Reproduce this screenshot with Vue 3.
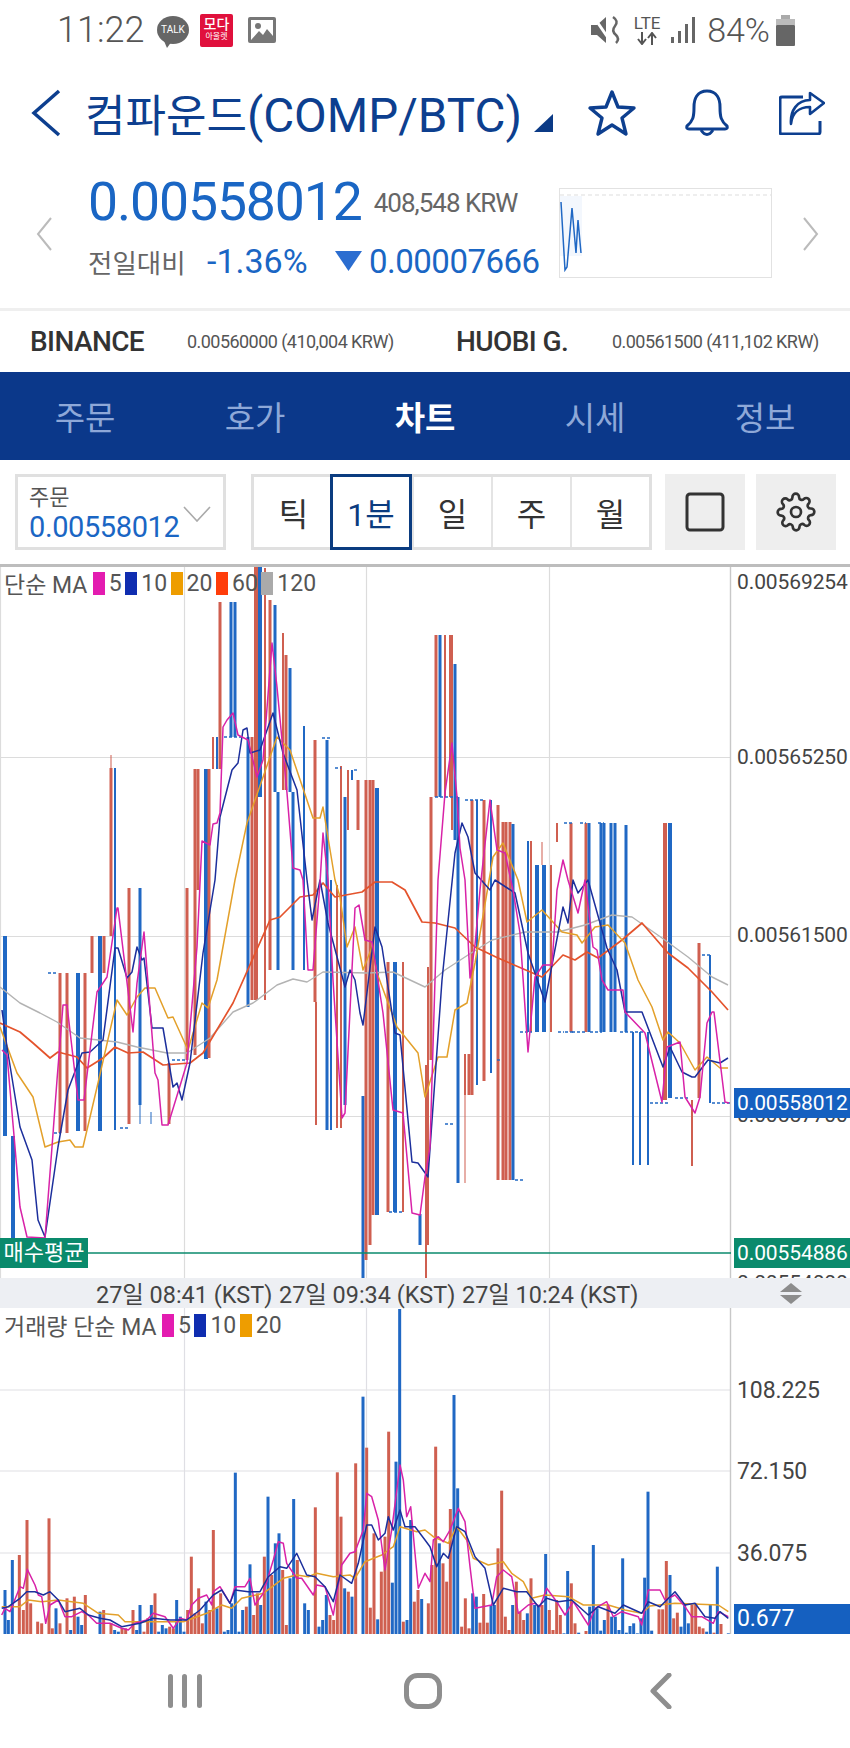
<script setup>
const tabs = ['주문', '호가', '차트', '시세', '정보']
const ranges = ['틱', '1분', '일', '주', '월']

// candles in page coordinates: x, top, bottom, colour, width
const candles = [
  [5,936,1136,'b',4],[13,1136,1238,'b',4],[60,973,1133,'r',3],[67,973,1133,'r',3],[78,973,1131,'b',4],[85,973,1131,'r',3],
  [92,936,973,'r',3],[100,936,1131,'b',4],[104,936,973,'r',3],[111,755,768,'r',1],[111,768,936,'r',3],[115,768,1130,'b',2],
  [129,888,1124,'r',3],[140,888,1105,'b',3],[140,1105,1124,'b',1],[151,1112,1124,'b',1],[169,1063,1124,'r',3],
  [187,888,1060,'r',3],[195,769,1055,'r',3],[198,769,890,'r',3],[206,769,1059,'b',4],[209,769,1058,'r',3],
  [213,737,769,'r',2],[217,737,769,'b',2],[220,602,769,'r',3],[231,602,737,'b',3],[235,602,737,'b',3],
  [248,737,1007,'b',3],[252,737,1000,'r',3],[256,564,1000,'r',4],[260,564,797,'b',4],[265,568,1000,'r',2],[270,600,970,'r',3],
  [275,605,792,'b',3],[283,633,790,'r',2],[286,655,790,'r',3],[290,668,792,'b',3],[278,792,970,'b',3],[293,792,970,'b',3],
  [304,726,970,'b',2],[315,740,1002,'r',3],[316,1002,1125,'r',2],[327,740,1130,'b',3],[331,880,1130,'b',2],[337,885,1128,'r',2],
  [341,766,1128,'r',2],[345,797,1105,'b',3],[348,770,830,'r',2],[352,770,780,'b',2],[358,780,830,'r',3],
  [363,1096,1278,'b',3],[366,780,1260,'r',3],[370,780,1245,'r',3],[373,780,1215,'r',3],[377,788,1215,'b',4],
  [388,962,1212,'r',3],[395,962,1212,'b',4],[403,962,1212,'r',2],[420,1214,1245,'b',3],
  [426,1065,1278,'r',2],[428,967,1245,'r',2],[431,797,1060,'r',3],[436,635,797,'r',3],[440,635,797,'b',3],[445,635,797,'r',2],
  [450,635,797,'r',2],[452,635,830,'r',2],[455,664,840,'b',3],[458,797,1183,'b',3],[465,1054,1183,'r',1],
  [465,1054,1095,'r',2],[469,1054,1095,'r',3],[472,800,1095,'r',3],[477,800,1085,'b',2],[484,800,1081,'r',3],[491,800,1073,'b',2],
  [498,805,1180,'r',3],[503,822,1180,'r',3],[506,822,1180,'r',3],[510,822,1180,'r',3],[513,824,1180,'b',3],
  [528,841,1032,'b',2],[531,841,1032,'r',2],[537,865,1032,'b',4],[544,865,1032,'b',4],[542,842,865,'r',1],[551,865,1032,'r',2],
  [557,823,842,'r',2],[571,823,1032,'r',3],[586,823,1032,'r',3],[589,823,1032,'b',3],[601,823,1032,'b',3],[604,823,1032,'b',3],
  [611,823,1032,'b',3],[615,823,1032,'b',3],[626,825,1032,'b',3],[633,1032,1165,'b',2],[640,1032,1165,'b',2],[648,1032,1165,'b',2],
  [665,823,1100,'r',4],[670,823,1098,'b',4],[692,1100,1166,'r',2],[699,943,1098,'r',3],[710,955,1103,'b',2]
]

// short flat candles, drawn as dashes: x, y, length
const dashes = [
  [48,973,10],[54,1133,6],[120,1128,8],[445,1124,10],[172,1060,14],[224,737,20],[322,738,8],[335,768,6],[354,770,4],
  [389,1212,14],[435,797,25],[465,800,20],[515,1180,10],[520,1032,12],[558,1032,6],[565,1032,8],[572,1032,14],[590,1032,12],
  [620,1032,24],[650,1103,20],[675,1098,14],[702,955,8],[712,1103,18],[564,823,8],[580,823,6],[598,823,6],[497,1060,4]
]

const ma5 = '2,1050 7,1055 15,1147 20,1207 27,1237 45,1238 52,1147 57,1080 63,1005 67,1005 78,1100 84,1100 97,992 107,977 117,908 118,908 133,1032 137,983 144,932 155,1073 158,1080 162,1125 168,1125 187,1063 197,947 202,841 210,845 213,824 217,823 220,813 223,727 227,720 233,713 238,735 248,740 257,777 263,760 272,643 277,687 287,793 293,868 300,870 303,880 308,970 313,970 320,883 323,833 328,880 333,980 342,1118 345,1113 355,908 359,905 365,940 372,942 383,1013 393,1110 403,1113 412,1213 420,1215 425,1177 430,1147 438,880 445,793 452,743 457,797 460,848 465,880 470,978 475,945 480,890 484,853 490,800 497,850 505,853 513,890 520,933 528,1052 535,977 543,965 552,965 557,890 563,860 568,880 578,913 585,880 593,947 597,950 602,980 608,990 623,990 625,1012 645,1033 662,1102 667,1047 680,1042 685,1097 695,1113 700,1097 707,1023 712,1012 714,1012 725,1102 729,1103'
const ma10 = '2,1010 7,1047 20,1127 32,1160 38,1220 45,1237 58,1147 68,1090 82,1053 90,1052 103,1040 115,948 118,948 127,978 132,972 137,947 142,960 144,958 152,1028 163,1028 173,1087 177,1083 182,1100 190,1063 203,953 215,880 220,817 232,770 238,763 243,730 247,728 250,753 260,750 273,713 283,753 297,790 307,880 312,920 320,880 328,923 345,987 350,970 355,980 360,1013 363,1025 375,927 382,947 395,1033 400,1035 412,1162 418,1163 428,1177 442,980 455,853 462,823 468,837 475,873 490,890 495,880 515,893 528,953 545,1002 563,907 568,923 573,880 578,893 588,880 607,948 617,970 625,1012 642,1012 663,1067 670,1047 682,1072 692,1077 695,1077 708,1060 720,1063 728,1058'
const ma20 = '0,1027 17,1073 33,1097 45,1147 58,1142 70,1140 75,1147 83,1147 98,1083 117,1000 127,1015 137,997 145,988 155,988 168,1018 173,1017 188,1050 202,1003 208,1008 217,980 235,880 247,823 277,737 290,750 313,818 320,818 323,807 335,880 340,897 347,947 355,927 363,970 372,947 377,973 397,1027 418,1053 425,1097 438,1057 447,1057 455,1010 467,1003 475,963 493,857 503,843 518,880 527,922 542,910 562,932 577,935 582,943 595,927 608,925 625,943 638,980 652,1007 663,1040 668,1032 680,1043 695,1070 707,1057 720,1068 728,1068'
const ma60 = '0,1023 20,1032 33,1043 50,1058 58,1052 77,1057 87,1068 103,1058 115,1047 128,1053 143,1052 163,1065 190,1063 203,1053 233,1003 270,920 280,917 300,897 313,895 323,883 335,897 362,892 375,882 392,882 405,890 422,922 435,923 455,928 475,947 498,958 542,977 563,955 575,960 587,952 598,958 622,940 642,923 668,953 688,968 712,992 728,1010'
const ma120 = '0,987 20,1003 40,1013 57,1022 80,1038 117,1042 137,1047 167,1053 187,1053 210,1038 233,1012 253,1003 277,985 293,979 307,982 323,972 367,973 393,972 425,987 445,970 468,955 492,940 525,932 558,932 585,925 612,915 632,917 662,938 688,957 712,977 728,985'

const priceLines = [
  { points: ma120, color: '#b3b3b3', width: 1.4 },
  { points: ma60, color: '#e4532c', width: 1.7 },
  { points: ma20, color: '#e3a02a', width: 1.5 },
  { points: ma10, color: '#1c2f9c', width: 1.5 },
  { points: ma5, color: '#d822a8', width: 1.5 }
]

// volume bars read off the left and right half of the chart: colour, x, top
const volLeft = 'b15:870 b25:960 b37:780 r58:765 r70:930 r81:660 r92:910 r113:965 r125:970 r147:655 r157:985 b168:925 r180:970 r201:895 b212:990 r223:890 b234:950 b245:975 r256:885 b300:935 r311:930 r333:970 b344:990 b355:995 r366:985 r377:985 r399:930 b410:990 b420:915 r432:995 r443:955 b454:915 r465:880 b476:995 b487:975 b498:985 r509:980 r520:985 b530:900 b541:950 b552:995 r563:930 r574:770 r585:940 r596:865 r607:970 b618:905 r629:930 r640:690 b651:925 r662:880 b673:995 b684:990 b695:910 b706:518 b717:995 b728:930 r739:920 b750:793 r761:945 r772:880 b782:915 r793:770 b804:590 r815:825 b826:730 b837:700 r848:810 r859:975 b870:835 b881:597 r892:780 b914:910 b925:930 r946:622 b957:980 b968:960 b979:885 r990:945 r1001:960 r1012:517 r1023:650 b1034:865 r1045:875 b1056:890 r1067:490 b1089:290 r1100:443 r1111:923 r1122:700 b1133:958 r1144:815 r1155:710 r1166:395 b1177:848 b1188:485 b1199:27 r1210:965 b1221:960 b1232:660 r1243:905 r1254:870 b1265:897'
const volRight = 'r10:910 r21:795 r32:440 b43:730 r54:790 r65:845 r76:627 b87:285 b98:565 r110:980 r121:895 r132:985 b143:880 b154:890 r165:968 r176:882 r187:968 b198:915 b208:915 r219:745 r230:572 r241:950 r252:990 b263:915 r274:845 r285:935 r296:960 b307:940 r318:835 b329:915 b340:915 r351:915 b362:762 r373:930 r384:990 r395:900 r406:945 b417:1000 b428:813 r439:850 r450:970 b461:998 r483:993 b494:920 b505:735 b516:925 b527:992 b538:960 r549:915 b560:950 b571:950 b582:990 b593:775 b604:998 b615:978 b626:970 b637:1000 b648:955 b659:833 b669:575 b680:992 r702:928 r713:928 r724:783 b735:825 r746:955 r757:938 b768:980 b779:910 b790:970 r801:915 r812:910 r823:980 r834:985 b845:995 b856:915 r867:998 b877:800 r888:972 b910:1000'

function parseVol(str, offset) {
  return str.split(' ').map((s) => {
    const [x, y] = s.slice(1).split(':').map(Number)
    return { x: offset + x / 3, top: 1300 + y / 3, color: s[0] }
  })
}
const volBars = [...parseVol(volLeft, 0), ...parseVol(volRight, 425)]

function zoomPts(left, right) {
  const conv = (str, offset) => str.split(' ').map((p) => {
    const [x, y] = p.split(',').map(Number)
    return (offset + x / 3).toFixed(1) + ',' + (1300 + y / 3).toFixed(1)
  })
  return [...conv(left, 0), ...conv(right, 425)].join(' ')
}

const volLines = [
  { color: '#e3a02a', points: zoomPts('5,920 30,920 60,920 85,900 125,905 175,900 250,910 295,940 355,945 375,965 460,965 550,965 620,940 665,915 695,925 725,895 790,880 850,835 890,825 925,830 950,820 1000,830 1050,825 1065,835 1095,785 1145,765 1180,740 1200,680 1250,695 1275,690', '25,710 70,730 95,680 125,720 145,775 190,795 235,785 260,820 295,845 320,895 360,885 430,890 475,915 550,915 600,930 650,940 675,918 750,910 880,915 910,935') },
  { color: '#d822a8', points: zoomPts('5,945 15,925 30,935 60,860 70,865 82,808 105,855 115,885 125,890 137,970 150,915 175,900 195,950 215,950 245,935 265,945 290,970 330,970 365,985 385,990 405,970 440,960 460,940 495,950 520,985 540,955 560,960 575,915 595,895 620,885 635,915 640,875 660,860 690,910 705,860 735,860 750,835 765,915 790,880 820,780 835,725 850,730 860,790 890,835 905,835 940,885 950,855 975,860 1000,945 1025,795 1050,760 1065,755 1090,690 1100,580 1115,590 1135,660 1155,810 1175,690 1200,495 1210,540 1220,650 1232,620 1245,760 1255,865 1275,820', '15,845 25,720 40,710 55,725 75,690 100,625 120,665 135,800 150,925 200,915 215,830 235,810 260,830 280,940 310,915 330,910 345,920 365,865 395,905 420,945 445,905 490,975 510,925 545,905 565,950 590,935 640,950 650,975 670,870 705,870 720,900 750,885 780,920 800,950 830,950 865,970 880,935 910,950') },
  { color: '#1c2f9c', points: zoomPts('5,925 25,920 60,895 80,875 105,875 130,885 150,875 175,900 195,935 240,925 265,945 300,955 330,960 365,980 420,970 460,955 510,960 560,960 600,930 640,885 665,870 690,910 705,870 745,875 780,875 805,830 840,800 860,805 890,760 920,825 945,830 975,860 1000,905 1020,825 1055,850 1075,790 1100,675 1115,675 1135,720 1155,700 1165,650 1180,690 1200,630 1215,680 1245,680 1275,720', '15,740 35,800 55,760 70,775 95,680 120,695 150,770 180,805 205,915 235,865 275,875 305,875 340,920 365,895 400,905 440,900 490,945 520,920 570,940 595,915 650,940 670,905 705,920 750,875 780,915 810,910 840,950 870,955 885,935 910,955') }
]

const barColor = { r: '#cf5f50', b: '#2068c4' }
</script>

<template>
  <div class="page">
    <div class="status">
      <span class="clock">11:22</span>
      <span class="talk">TALK</span>
      <span class="moda"><b>모다</b><i>아울렛</i></span>
      <svg class="pic" width="28" height="26" viewBox="0 0 28 26">
        <rect width="28" height="26" rx="2" fill="#777" />
        <rect x="3" y="3" width="22" height="20" fill="#fff" />
        <circle cx="10" cy="9" r="3" fill="#777" />
        <path d="M3 23 L11 14 L15 18 L19 12 L25 19 V23 Z" fill="#777" />
      </svg>
      <svg class="mute" width="32" height="30" viewBox="0 0 32 30">
        <path d="M0 10 H6 L15 2 V28 L6 20 H0 Z" fill="#666" />
        <path d="M2 1 L20 27" stroke="#fff" stroke-width="3" />
        <path d="M22 2 Q28 6 24 11 Q20 16 25 20 Q29 24 25 28" fill="none" stroke="#666" stroke-width="2.5" />
      </svg>
      <div class="lte">
        <span>LTE</span>
        <svg width="20" height="13" viewBox="0 0 20 13">
          <path d="M5 0 V10 M1 7 L5 12 L9 7 M15 13 V3 M11 6 L15 1 L19 6" fill="none" stroke="#555" stroke-width="2" />
        </svg>
      </div>
      <svg class="signal" width="24" height="26" viewBox="0 0 24 26">
        <rect x="0" y="20" width="3" height="6" fill="#666" />
        <rect x="7" y="14" width="3" height="12" fill="#666" />
        <rect x="14" y="7" width="3" height="19" fill="#666" />
        <rect x="21" y="0" width="3" height="26" fill="#666" />
      </svg>
      <span class="battery-text">84%</span>
      <svg width="19" height="31" viewBox="0 0 19 31">
        <rect x="5" y="0" width="9" height="4" fill="#aaa" />
        <rect x="0" y="4" width="19" height="6" fill="#bbb" />
        <rect x="0" y="10" width="19" height="21" rx="1" fill="#666" />
      </svg>
    </div>

    <header class="title-bar">
      <svg width="30" height="48" viewBox="0 0 30 48">
        <path d="M28 2 L3 24 L28 46" fill="none" stroke="#0d3f8f" stroke-width="3.5" />
      </svg>
      <h1><span class="coin">컴파운드</span>(COMP/BTC)</h1>
      <svg class="caret" width="19" height="18" viewBox="0 0 19 18"><path d="M19 0 V18 H0 Z" fill="#0b3a86" /></svg>
      <svg class="star" width="50" height="48" viewBox="0 0 50 48">
        <path d="M25 3 L31 18 L47 19 L35 29 L39 45 L25 36 L11 45 L15 29 L3 19 L19 18 Z" fill="none" stroke="#0d3f8f" stroke-width="3.4" stroke-linejoin="round" />
      </svg>
      <svg class="bell" width="44" height="48" viewBox="0 0 44 48">
        <path d="M22 2 C12 2 9 10 9 18 C9 28 8 32 2 37 Q1 40 4 40 H40 Q43 40 42 37 C36 32 35 28 35 18 C35 10 32 2 22 2 Z" fill="none" stroke="#0d3f8f" stroke-width="3" />
        <path d="M16 41 Q22 50 28 41" fill="none" stroke="#0d3f8f" stroke-width="3" />
      </svg>
      <svg class="share" width="46" height="44" viewBox="0 0 46 44">
        <path d="M24 6 H3 Q1 6 1 8 V41 Q1 43 3 43 H39 Q41 43 41 41 V30" fill="none" stroke="#0d3f8f" stroke-width="3" />
        <path d="M12 33 C13 22 20 16 31 16 V23 L45 12 L31 2 V9 C18 9 11 20 12 33 Z" fill="#fff" stroke="#0d3f8f" stroke-width="2.6" stroke-linejoin="round" />
      </svg>
    </header>

    <section class="price-panel">
      <svg class="arrow" width="16" height="34" viewBox="0 0 16 34"><path d="M15 1 L2 17 L15 33" fill="none" stroke="#bbb" stroke-width="2" /></svg>
      <div class="price-info">
        <div class="price-row">
          <span class="price">0.00558012</span>
          <span class="krw">408,548 KRW</span>
        </div>
        <div class="change-row">
          <span class="change-label">전일대비</span>
          <span class="change-pct">-1.36%</span>
          <svg width="27" height="20" viewBox="0 0 27 20"><path d="M0 0 H27 L13.5 20 Z" fill="#2b6dd0" /></svg>
          <span class="change-val">0.00007666</span>
        </div>
      </div>
      <svg class="mini" width="213" height="90" viewBox="559 188 213 90">
        <rect x="559.5" y="188.5" width="212" height="89" fill="#fff" stroke="#e2e2e2" />
        <line x1="560" y1="195" x2="771" y2="195" stroke="#ddd" stroke-dasharray="4 3" />
        <rect x="560" y="196" width="22" height="60" fill="#f3f7fd" />
        <polyline points="561,202 565,270 567,267 572,208 576,253 578,220 581,253" fill="none" stroke="#2068c4" stroke-width="1.5" />
      </svg>
      <svg class="arrow" width="16" height="34" viewBox="0 0 16 34"><path d="M1 1 L14 17 L1 33" fill="none" stroke="#bbb" stroke-width="2" /></svg>
    </section>

    <section class="exchanges">
      <strong>BINANCE</strong>
      <span>0.00560000 (410,004 KRW)</span>
      <strong>HUOBI G.</strong>
      <span>0.00561500 (411,102 KRW)</span>
    </section>

    <nav class="tabs">
      <span v-for="tab in tabs" :key="tab" :class="{ active: tab === '차트' }">{{ tab }}</span>
    </nav>

    <section class="controls">
      <div class="order-select">
        <div>
          <div class="order-label">주문</div>
          <div class="order-value">0.00558012</div>
        </div>
        <svg width="28" height="16" viewBox="0 0 28 16"><path d="M1 1 L14 15 L27 1" fill="none" stroke="#aaa" stroke-width="1.6" /></svg>
      </div>
      <div class="ranges">
        <span v-for="r in ranges" :key="r" :class="{ active: r === '1분' }">{{ r }}</span>
      </div>
      <div class="icon-btn">
        <svg width="40" height="40" viewBox="0 0 40 40"><rect x="2" y="2" width="36" height="36" rx="3" fill="none" stroke="#333" stroke-width="3" /></svg>
      </div>
      <div class="icon-btn">
        <svg width="40" height="40" viewBox="0 0 24 24" fill="none" stroke="#333" stroke-width="1.6" stroke-linejoin="round">
          <circle cx="12" cy="12" r="3" />
          <path d="M19.4 15a1.65 1.65 0 0 0 .33 1.82l.06.06a2 2 0 1 1-2.83 2.83l-.06-.06a1.65 1.65 0 0 0-2.82 1.17V21a2 2 0 1 1-4 0v-.09a1.65 1.65 0 0 0-2.82-1.12l-.06.06a2 2 0 1 1-2.83-2.83l.06-.06a1.65 1.65 0 0 0-1.17-2.82H3a2 2 0 1 1 0-4h.09A1.65 1.65 0 0 0 4.2 7.32l-.06-.06a2 2 0 1 1 2.83-2.83l.06.06a1.65 1.65 0 0 0 2.82-1.17V3a2 2 0 1 1 4 0v.09a1.65 1.65 0 0 0 2.82 1.17l.06-.06a2 2 0 1 1 2.83 2.83l-.06.06a1.65 1.65 0 0 0 1.17 2.82H21a2 2 0 1 1 0 4h-.09a1.65 1.65 0 0 0-1.51 1z" />
        </svg>
      </div>
    </section>

    <section class="price-chart">
      <svg class="plot" width="850" height="714" viewBox="0 564 850 714">
        <g stroke="#dcdcdc" stroke-width="1.2">
          <line x1="184.5" y1="564" x2="184.5" y2="1278" />
          <line x1="366.5" y1="564" x2="366.5" y2="1278" />
          <line x1="549.5" y1="564" x2="549.5" y2="1278" />
          <line x1="0" y1="757.5" x2="731" y2="757.5" />
          <line x1="0" y1="936.5" x2="731" y2="936.5" />
          <line x1="0" y1="1116.5" x2="731" y2="1116.5" />
          <line x1="0.5" y1="564" x2="0.5" y2="1278" />
        </g>
        <line x1="730.5" y1="564" x2="730.5" y2="1278" stroke="#c8c8c8" stroke-width="1.4" />
        <rect v-for="(c, i) in candles" :key="i" :x="c[0] - c[4] / 2" :y="c[1]" :width="c[4]" :height="c[2] - c[1]" :fill="barColor[c[3]]" />
        <line v-for="(d, i) in dashes" :key="'d' + i" :x1="d[0]" :y1="d[1]" :x2="d[0] + d[2]" :y2="d[1]" stroke="#2068c4" stroke-width="1.4" stroke-dasharray="3 2" />
        <line x1="0" y1="1253" x2="731" y2="1253" stroke="#0a8a6c" stroke-width="1.6" />
        <polyline v-for="l in priceLines" :key="l.color" :points="l.points" fill="none" :stroke="l.color" :stroke-width="l.width" stroke-linejoin="round" />
      </svg>

      <div class="legend">
        <span class="legend-name">단순 MA</span>
        <i class="swatch magenta"></i><span>5</span>
        <i class="swatch navy"></i><span>10</span>
        <i class="swatch orange"></i><span>20</span>
        <i class="swatch red"></i><span>60</span>
        <i class="swatch grey"></i><span>120</span>
      </div>

      <span class="axis" style="top: 5px">0.00569254</span>
      <span class="axis" style="top: 180px">0.00565250</span>
      <span class="axis" style="top: 358px">0.00561500</span>
      <span class="axis" style="top: 538px">0.00557700</span>
      <span class="axis" style="top: 706px">0.00554000</span>
      <span class="tag blue">0.00558012</span>
      <span class="tag green">0.00554886</span>
      <span class="avg-label">매수평균</span>
    </section>

    <div class="time-bar">
      <div class="times">
        <span>27일 08:41 (KST)</span>
        <span>27일 09:34 (KST)</span>
        <span>27일 10:24 (KST)</span>
      </div>
      <svg width="26" height="21" viewBox="0 0 26 21">
        <path d="M13 0 L24 9 H2 Z" fill="#8c8c8c" />
        <path d="M2 12 H24 L13 21 Z" fill="#8c8c8c" />
      </svg>
    </div>

    <section class="volume-chart">
      <svg class="plot" width="850" height="326" viewBox="0 1308 850 326">
        <g stroke="#dfdfe4" stroke-width="1.2">
          <line x1="184.5" y1="1308" x2="184.5" y2="1634" />
          <line x1="366.5" y1="1308" x2="366.5" y2="1634" />
          <line x1="549.5" y1="1308" x2="549.5" y2="1634" />
          <line x1="0" y1="1390" x2="731" y2="1390" />
          <line x1="0" y1="1471" x2="731" y2="1471" />
          <line x1="0" y1="1553" x2="731" y2="1553" />
        </g>
        <line x1="730.5" y1="1308" x2="730.5" y2="1634" stroke="#c8c8c8" stroke-width="1.4" />
        <rect v-for="(b, i) in volBars" :key="i" :x="b.x - 1.5" :y="b.top" width="3" :height="1634 - b.top" :fill="barColor[b.color]" />
        <polyline v-for="l in volLines" :key="l.color" :points="l.points" fill="none" :stroke="l.color" stroke-width="1.5" stroke-linejoin="round" />
      </svg>
      <div class="legend vol">
        <span class="legend-name">거래량 단순 MA</span>
        <i class="swatch magenta"></i><span>5</span>
        <i class="swatch navy"></i><span>10</span>
        <i class="swatch orange"></i><span>20</span>
      </div>
      <span class="axis vol-axis" style="top: 70px">108.225</span>
      <span class="axis vol-axis" style="top: 151px">72.150</span>
      <span class="axis vol-axis" style="top: 233px">36.075</span>
      <span class="tag vol-tag">0.677</span>
    </section>

    <footer class="soft-keys">
      <svg width="34" height="36" viewBox="0 0 34 36">
        <rect x="0" y="1" width="5" height="34" rx="2.5" fill="#8e8e8e" />
        <rect x="14" y="1" width="5" height="34" rx="2.5" fill="#8e8e8e" />
        <rect x="29" y="1" width="5" height="34" rx="2.5" fill="#8e8e8e" />
      </svg>
      <svg width="38" height="36" viewBox="0 0 38 36"><rect x="2.5" y="2.5" width="33" height="31" rx="11" fill="none" stroke="#8e8e8e" stroke-width="5" /></svg>
      <svg width="22" height="36" viewBox="0 0 22 36"><path d="M19 2 L3 18 L19 34" fill="none" stroke="#8e8e8e" stroke-width="5" stroke-linecap="round" stroke-linejoin="round" /></svg>
    </footer>
  </div>
</template>

<style scoped>
.page {
  width: 850px;
  height: 1748px;
  overflow: hidden;
  background: #fff;
  font-family: Roboto, "Noto Sans CJK KR", sans-serif;
  color: #444;
}

.status {
  height: 60px;
  display: flex;
  align-items: center;
  padding: 0 55px 0 57px;
  box-sizing: border-box;
}
.clock {
  font-size: 36px;
  font-weight: 300;
  color: #555;
  width: 100px;
}
.talk {
  position: relative;
  width: 32px;
  height: 28px;
  border-radius: 50%;
  background: #666;
  color: #fff;
  font-size: 10px;
  text-align: center;
  line-height: 28px;
}
.talk::after {
  content: "";
  position: absolute;
  left: 7px;
  bottom: -4px;
  border-left: 3px solid transparent;
  border-right: 5px solid transparent;
  border-top: 7px solid #666;
}
.moda {
  width: 33px;
  height: 33px;
  margin-left: 11px;
  border-radius: 2px;
  background: #e0103c;
  color: #fff;
  display: flex;
  flex-direction: column;
  align-items: center;
  line-height: 1;
}
.moda b {
  font-size: 14px;
  font-weight: 500;
  margin-top: 3px;
}
.moda i {
  font-size: 8px;
  font-style: normal;
  margin-top: 2px;
}
.pic {
  margin-left: 15px;
}
.mute {
  margin-left: auto;
}
.lte {
  width: 28px;
  margin-left: 10px;
  display: flex;
  flex-direction: column;
  align-items: center;
  gap: 1px;
  font-size: 17px;
  line-height: 15px;
  color: #555;
}
.signal {
  margin-left: 10px;
}
.battery-text {
  margin-left: 12px;
  margin-right: 6px;
  font-size: 34px;
  font-weight: 300;
  color: #555;
}

.title-bar {
  height: 106px;
  display: flex;
  align-items: center;
  padding-left: 31px;
}
.title-bar h1 {
  margin: 0 0 0 24px;
  font-size: 47.5px;
  font-weight: 400;
  color: #0d3f8f;
  white-space: nowrap;
}
.coin {
  font-size: 44px;
}
.caret {
  margin: 20px 0 0 12px;
}
.star {
  margin-left: 34px;
}
.bell {
  margin-left: 48px;
}
.share {
  margin-left: 50px;
}

.price-panel {
  height: 145px;
  box-sizing: border-box;
  display: flex;
  align-items: flex-start;
  padding-left: 36px;
  border-bottom: 3px solid #efefef;
}
.arrow {
  margin-top: 51px;
}
.price-info {
  width: 471px;
  margin-left: 36px;
}
.price-row {
  height: 70px;
  display: flex;
  align-items: center;
}
.price {
  font-size: 53.5px;
  color: #1a66c4;
  letter-spacing: -1.1px;
}
.krw {
  margin-left: 12px;
  font-size: 26px;
  color: #666;
  letter-spacing: -1px;
  padding-top: 3px;
}
.change-row {
  height: 50px;
  display: flex;
  align-items: center;
}
.change-label {
  font-size: 26.5px;
  color: #666;
  width: 119px;
  white-space: nowrap;
}
.change-pct {
  font-size: 34px;
  color: #1a66c4;
  width: 128px;
  white-space: nowrap;
}
.change-val {
  margin-left: 7px;
  font-size: 33px;
  color: #1a66c4;
  letter-spacing: -0.5px;
}
.mini {
  margin-top: 22px;
  margin-right: 31px;
}

.exchanges {
  height: 61px;
  display: grid;
  grid-template-columns: 157px 269px 156px auto;
  align-items: center;
  padding-left: 30px;
  color: #555;
}
.exchanges strong {
  font-size: 28px;
  font-weight: 500;
  color: #333;
  letter-spacing: -0.6px;
}
.exchanges span {
  font-size: 18px;
  letter-spacing: -0.55px;
  white-space: nowrap;
}

.tabs {
  height: 88px;
  display: grid;
  grid-template-columns: repeat(5, 1fr);
  align-items: center;
  justify-items: center;
  background: #0b388a;
  color: #8ea8d8;
  font-size: 33px;
}
.tabs .active {
  color: #fff;
  font-weight: 700;
}

.controls {
  height: 104px;
  box-sizing: border-box;
  display: flex;
  padding: 14px 14px 14px 15px;
}
.order-select {
  width: 211px;
  height: 76px;
  box-sizing: border-box;
  border: 3px solid #e0e0e0;
  display: flex;
  align-items: center;
  justify-content: space-between;
  padding: 3px 12px 0 11px;
}
.order-label {
  font-size: 22px;
  line-height: 26px;
  color: #555;
}
.order-value {
  font-size: 29px;
  line-height: 32px;
  color: #1a66c4;
  letter-spacing: -0.4px;
  white-space: nowrap;
}
.ranges {
  width: 401px;
  height: 76px;
  margin-left: 25px;
  box-sizing: border-box;
  border: 3px solid #e0e0e0;
  display: grid;
  grid-template-columns: repeat(5, 1fr);
  font-size: 32px;
  color: #333;
}
.ranges span {
  display: flex;
  align-items: center;
  justify-content: center;
  border-left: 2px solid #e4e4e4;
}
.ranges span:first-child {
  border-left: 0;
}
.ranges .active {
  margin: -3px 0 -3px -3px;
  border: 3px solid #0b3c80;
  color: #0b3c80;
}
.icon-btn {
  width: 80px;
  height: 76px;
  margin-left: 13px;
  background: #eee;
  display: flex;
  align-items: center;
  justify-content: center;
}
.icon-btn:last-child {
  margin-left: 11px;
}

.price-chart {
  position: relative;
  height: 714px;
  box-sizing: border-box;
  overflow: hidden;
}
.price-chart::before {
  content: "";
  position: absolute;
  z-index: 1;
  top: 0;
  left: 0;
  right: 0;
  height: 3px;
  background: #bdbdbd;
}
.plot {
  position: absolute;
  top: 0;
  left: 0;
}
.legend {
  position: absolute;
  top: 7px;
  left: 4px;
  display: flex;
  align-items: center;
  height: 24px;
  font-size: 23px;
  color: #555;
}
.legend.vol {
  top: 5px;
}
.legend-name {
  margin-right: 2px;
}
.swatch {
  width: 12px;
  height: 23px;
  margin: 0 4px 0 3.5px;
}
.magenta { background: #e31cb0; }
.navy { background: #0f2db0; }
.orange { background: #ee9d00; }
.red { background: #ff3d0a; }
.grey { background: #aaa; }
.axis {
  position: absolute;
  left: 737px;
  font-size: 21px;
  line-height: 26px;
  color: #444;
  letter-spacing: -0.1px;
}
.vol-axis {
  font-size: 23px;
}
.tag {
  position: absolute;
  left: 734px;
  right: 0;
  height: 30px;
  padding-left: 3px;
  line-height: 30px;
  font-size: 21px;
  color: #fff;
  letter-spacing: -0.1px;
}
.tag.blue {
  top: 524px;
  background: #1560c0;
}
.tag.green {
  top: 674px;
  background: #0a8a6c;
}
.tag.vol-tag {
  top: 296px;
  background: #1560c0;
  font-size: 23px;
}
.avg-label {
  position: absolute;
  top: 674px;
  left: 0;
  width: 88px;
  height: 30px;
  background: #0a8a6c;
  color: #fff;
  font-size: 22px;
  line-height: 30px;
  text-align: center;
  white-space: nowrap;
}

.time-bar {
  height: 30px;
  display: flex;
  align-items: center;
  background: #edeff3;
  padding-left: 96px;
  position: relative;
  z-index: 1;
}
.times {
  width: 682px;
  display: flex;
  gap: 7px;
  font-size: 23.4px;
  color: #444;
}
.times span {
  width: 176px;
  white-space: nowrap;
}

.volume-chart {
  position: relative;
  height: 326px;
  overflow: hidden;
}

.soft-keys {
  height: 114px;
  display: grid;
  grid-template-columns: 370px 106px 1fr;
  align-items: center;
  justify-items: center;
}
.soft-keys svg:nth-child(3) {
  justify-self: start;
  margin-left: 174px;
}
</style>

<style>
body {
  margin: 0;
  background: #fff;
}
</style>
